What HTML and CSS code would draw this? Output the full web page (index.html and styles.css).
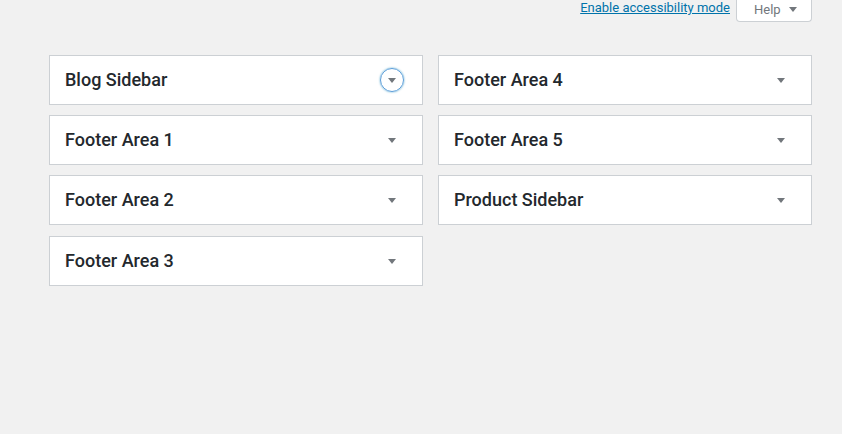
FILE: index.html
```html
<!DOCTYPE html>
<html>
  <head>
    <title>Widgets</title>
    <link rel="stylesheet" href="styles.css">
  </head>
  <body>
    <div class="screen-meta">
      <a class="a11y-link" href="#">Enable accessibility mode</a>
      <button class="help-tab">Help <span class="caret"></span></button>
    </div>

    <div class="sidebars">
      <div class="sidebar-col">
        <div class="sidebar-box">
          <h2>Blog Sidebar</h2>
          <span class="toggle focused"><span class="caret"></span></span>
        </div>
        <div class="sidebar-box">
          <h2>Footer Area 1</h2>
          <span class="toggle"><span class="caret"></span></span>
        </div>
        <div class="sidebar-box">
          <h2>Footer Area 2</h2>
          <span class="toggle"><span class="caret"></span></span>
        </div>
        <div class="sidebar-box">
          <h2>Footer Area 3</h2>
          <span class="toggle"><span class="caret"></span></span>
        </div>
      </div>
      <div class="sidebar-col">
        <div class="sidebar-box">
          <h2>Footer Area 4</h2>
          <span class="toggle"><span class="caret"></span></span>
        </div>
        <div class="sidebar-box">
          <h2>Footer Area 5</h2>
          <span class="toggle"><span class="caret"></span></span>
        </div>
        <div class="sidebar-box">
          <h2>Product Sidebar</h2>
          <span class="toggle"><span class="caret"></span></span>
        </div>
      </div>
    </div>
  </body>
</html>
```

FILE: styles.css
```css
html,
body {
  margin: 0;
  padding: 0;
  height: 100%;
  background: #f1f1f1;
  font-family: Roboto, "Liberation Sans", sans-serif;
  color: #23282d;
}

.screen-meta {
  display: flex;
  justify-content: flex-end;
  align-items: flex-start;
  padding-right: 30px;
  height: 22px;
}

.a11y-link {
  font-size: 13px;
  color: #0073aa;
  text-decoration: underline;
  line-height: 15px;
  margin-right: 6px;
}

.help-tab {
  display: flex;
  align-items: center;
  gap: 8px;
  height: 22px;
  padding: 0 16px 2px 17px;
  background: #fff;
  border: 1px solid #ccd0d4;
  border-top: none;
  border-radius: 0 0 4px 4px;
  font-family: inherit;
  font-size: 13px;
  color: #72777c;
  box-sizing: border-box;
  width: 76px;
}

.caret {
  display: inline-block;
  width: 0;
  height: 0;
  border-left: 4px solid transparent;
  border-right: 4px solid transparent;
  border-top: 5px solid #72777c;
}

.sidebars {
  display: flex;
  gap: 15px;
  padding: 33px 30px 0 49px;
}

.sidebar-col {
  width: 374px;
  display: flex;
  flex-direction: column;
  gap: 10px;
}

.sidebar-box {
  display: flex;
  align-items: center;
  justify-content: space-between;
  height: 50px;
  box-sizing: border-box;
  background: #fff;
  border: 1px solid #ccd0d4;
  padding: 0 18px 0 15px;
}

/* last box in the left column sits one pixel lower */
.sidebar-col:first-child .sidebar-box:last-child {
  margin-top: 1px;
}

.sidebar-box h2 {
  margin: 0 0 2px;
  font-size: 18px;
  font-weight: 500;
  color: #23282d;
}

.toggle {
  display: flex;
  align-items: center;
  justify-content: center;
  width: 24px;
  height: 24px;
  border-radius: 50%;
  border: 1px solid transparent;
  box-sizing: border-box;
  padding-top: 1px;
}

.toggle.focused {
  border-color: #5b9dd9;
  box-shadow: 0 0 2px rgba(30, 140, 190, 0.8);
}
```
